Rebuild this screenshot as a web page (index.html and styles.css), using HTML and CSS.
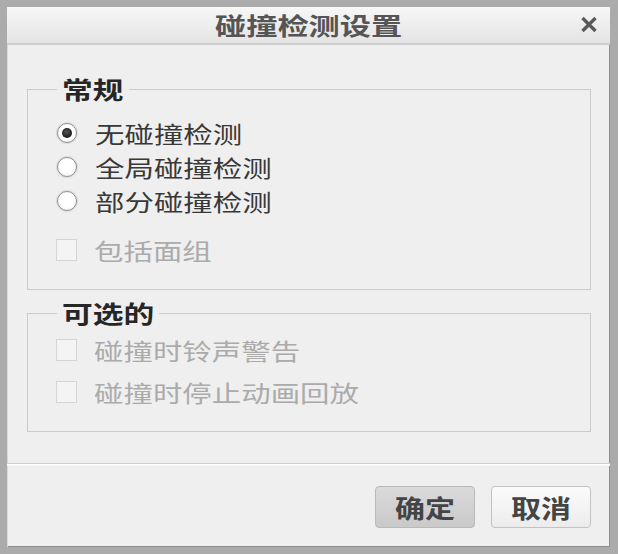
FILE: index.html
```html
<!DOCTYPE html>
<html lang="zh">
<head>
<meta charset="utf-8">
<title>碰撞检测设置</title>
<link rel="stylesheet" href="styles.css">
</head>
<body>
<div class="window">
  <div class="titlebar">
    <span></span>
    <span class="title"><span class="sx">碰撞检测设置</span></span>
    <span class="close">
      <svg width="18" height="17" viewBox="0 0 18 17"><path d="M2.5 2 L15.5 15 M15.5 2 L2.5 15" stroke="#5a5a5a" stroke-width="3.4" stroke-linecap="butt"/></svg>
    </span>
  </div>
  <div class="content">
    <fieldset class="group g1">
      <legend><span class="sx">常规</span></legend>
      <div class="radios">
        <div class="row"><span class="radio checked"></span><span class="label sx">无碰撞检测</span></div>
        <div class="row"><span class="radio"></span><span class="label sx">全局碰撞检测</span></div>
        <div class="row"><span class="radio"></span><span class="label sx">部分碰撞检测</span></div>
      </div>
      <div class="row disabled faces"><span class="check"></span><span class="label sx">包括面组</span></div>
    </fieldset>
    <fieldset class="group g2">
      <legend><span class="sx">可选的</span></legend>
      <div class="checks">
        <div class="row disabled"><span class="check"></span><span class="label sx">碰撞时铃声警告</span></div>
        <div class="row disabled"><span class="check"></span><span class="label sx">碰撞时停止动画回放</span></div>
      </div>
    </fieldset>
  </div>
  <div class="footer">
    <button class="btn primary"><span class="sx">确定</span></button>
    <button class="btn"><span class="sx">取消</span></button>
  </div>
</div>
</body>
</html>
```
FILE: styles.css
```css
* { box-sizing: border-box; }
html, body { margin: 0; padding: 0; }
body {
  width: 618px;
  height: 554px;
  background: #9c9c9c;
  font-family: "Noto Sans CJK SC", "Noto Sans", sans-serif;
}
.window {
  width: 618px;
  height: 554px;
  border-style: solid;
  border-color: #ababab;
  border-width: 7px 8px 7px 7px;
  box-shadow: inset 1px 1px 0 #d8d8d8, 0 0 0 1px #8e8e8e inset;
  background: #efefef;
  display: flex;
  flex-direction: column;
}
.sx {
  display: inline-block;
  transform: scaleX(1.28);
  transform-origin: left center;
  white-space: nowrap;
}
.titlebar {
  height: 38px;
  flex: none;
  display: grid;
  grid-template-columns: 1fr auto 1fr;
  align-items: center;
  background: linear-gradient(#f7f7f7, #e4e4e4);
  border-bottom: 2px solid #cdcdcd;
}
.title {
  font-size: 24px;
  font-weight: bold;
  color: #555;
  line-height: 36px;
  width: 187px;
}
.title .sx { transform: scaleX(1.3); }
.close {
  justify-self: end;
  padding-right: 12px;
  display: flex;
  align-items: center;
  height: 36px;
  margin-top: -2px;
}
.content {
  flex: 1;
  padding: 29px 19px 0 20px;
}
.group {
  margin: 0;
  padding: 0 0 22px 0;
  border: 1px solid #cbcbcb;
  min-width: 0;
}
.group legend {
  margin-left: 29px;
  padding: 0 5px;
  font-size: 24px;
  font-weight: bold;
  color: #262626;
  line-height: 30px;
  height: 30px;
  width: 72px;
}
.g2 { margin-top: 8px; }
.g2 legend { width: 102px; }
.radios { padding-top: 12px; }
.row {
  height: 34px;
  display: flex;
  align-items: center;
  padding-left: 29px;
}
.label {
  font-size: 23px;
  line-height: 34px;
  color: #383838;
  margin-left: 18px;
}
.disabled .label { color: #ababab; margin-left: 17px; }
.radio {
  width: 20px;
  height: 20px;
  border-radius: 50%;
  border: 1px solid #8f8f8f;
  background: radial-gradient(circle at 50% 40%, #ffffff 55%, #e8e8e8 100%);
  box-shadow: 0 0 0 1px #dcdcdc;
  flex: none;
  display: flex;
  align-items: center;
  justify-content: center;
}
.radio.checked::after {
  content: "";
  width: 10px;
  height: 10px;
  border-radius: 50%;
  background: radial-gradient(circle at 45% 40%, #555 0%, #1a1a1a 70%);
}
.faces { margin-top: 15px; }
.check {
  width: 21px;
  height: 22px;
  margin-left: -1px;
  border: 1px solid #d4d4d4;
  background: #f4f4f4;
  flex: none;
}
.checks {
  padding-top: 5px;
  display: flex;
  flex-direction: column;
  gap: 8px;
}
.footer {
  height: 84px;
  flex: none;
  border-top: 1px solid #cfcfcf;
  box-shadow: inset 0 1px 0 #ffffff, inset 0 2px 0 #f6f6f6;
  display: flex;
  justify-content: flex-end;
  align-items: flex-start;
  gap: 16px;
  padding: 22px 19px 0 0;
}
.btn {
  width: 100px;
  height: 42px;
  border-radius: 4px;
  border: 1px solid #c2c2c2;
  background: linear-gradient(#fbfbfb, #ececec);
  font-family: "Noto Sans CJK SC", "Noto Sans", sans-serif;
  font-size: 25px;
  font-weight: bold;
  color: #444;
  padding: 0;
  display: flex;
  align-items: center;
  justify-content: center;
}
.btn .sx { transform-origin: center; transform: scaleX(1.2); }
.btn.primary {
  border-color: #b9b9b9;
  background: linear-gradient(#dadada, #c9c9c9);
}
```
